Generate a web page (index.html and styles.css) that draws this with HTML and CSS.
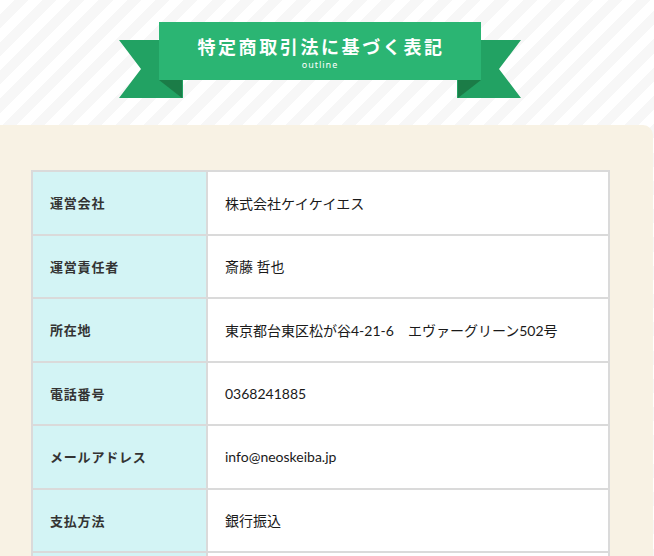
FILE: index.html
```html
<!DOCTYPE html>
<html lang="ja">
<head>
<meta charset="utf-8">
<link rel="stylesheet" href="styles.css">
</head>
<body>
<header class="hero">
  <div class="ribbon">
    <svg class="tail tail-left" width="64" height="58" viewBox="0 0 64 58">
      <polygon points="0,0 64,0 64,58 0,58 22,29" fill="#22a263"/>
      <polygon points="40,40 63,40 63,58" fill="#1b7c47"/>
    </svg>
    <svg class="tail tail-right" width="64" height="58" viewBox="0 0 64 58">
      <polygon points="0,0 64,0 42,29 64,58 0,58" fill="#22a263"/>
      <polygon points="1,40 24,40 1,58" fill="#1b7c47"/>
    </svg>
    <div class="ribbon-body">
      <h1 class="ribbon-title">特定商取引法に基づく表記</h1>
      <p class="ribbon-sub">outline</p>
    </div>
  </div>
</header>
<main class="panel">
  <table class="info">
    <tr><th>運営会社</th><td>株式会社ケイケイエス</td></tr>
    <tr><th>運営責任者</th><td>斎藤 哲也</td></tr>
    <tr><th>所在地</th><td>東京都台東区松が谷4-21-6　エヴァーグリーン502号</td></tr>
    <tr><th>電話番号</th><td>0368241885</td></tr>
    <tr><th>メールアドレス</th><td>info@neoskeiba.jp</td></tr>
    <tr><th>支払方法</th><td>銀行振込</td></tr>
    <tr><th>&nbsp;</th><td>&nbsp;</td></tr>
  </table>
</main>
</body>
</html>
```
FILE: styles.css
```css
html, body {
  margin: 0;
  padding: 0;
}
body {
  width: 654px;
  height: 556px;
  overflow: hidden;
  background: #ffffff repeating-linear-gradient(135deg, #ffffff 0 10px, #f7f7f7 10px 20px);
  font-family: "Lato", "Noto Sans CJK JP", sans-serif;
}
.hero {
  height: 125px;
  position: relative;
}
.ribbon {
  position: absolute;
  left: 119px;
  top: 22px;
  width: 402px;
  height: 76px;
}
.tail {
  position: absolute;
  top: 18px;
  display: block;
}
.tail-left { left: 0; }
.tail-right { right: 0; }
.ribbon-body {
  position: absolute;
  left: 40px;
  top: 0;
  width: 322px;
  height: 58px;
  background: #2bb573;
  text-align: center;
  color: #ffffff;
}
.ribbon-title {
  margin: 0;
  padding-top: 13px;
  padding-left: 2px;
  font-family: "Noto Sans CJK JP", sans-serif;
  font-weight: 700;
  font-size: 18px;
  line-height: 22px;
  letter-spacing: 2.6px;
}
.ribbon-sub {
  margin: 3px 0 0;
  font-family: "Noto Sans", sans-serif;
  font-size: 9px;
  line-height: 10px;
  letter-spacing: 1px;
}
.panel {
  width: 653px;
  height: 431px;
  background: #f8f2e4;
  border-top-right-radius: 10px;
  padding-top: 45px;
  box-sizing: border-box;
}
.info {
  margin-left: 31px;
  width: 579px;
  border-collapse: collapse;
  border: 2px solid #dadada;
  background: #ffffff;
}
.info th, .info td {
  border: 2px solid #dadada;
  height: 63.5px;
  padding: 0;
  box-sizing: border-box;
  vertical-align: middle;
  text-align: left;
}
.info th {
  width: 175px;
  background: #d3f4f5;
  padding-left: 17px;
  font-family: "Noto Sans CJK JP", sans-serif;
  font-weight: 700;
  font-size: 13px;
  letter-spacing: 0.8px;
  color: #333333;
}
.info td {
  padding-left: 17px;
  font-size: 14px;
  color: #1a1a1a;
}
```
